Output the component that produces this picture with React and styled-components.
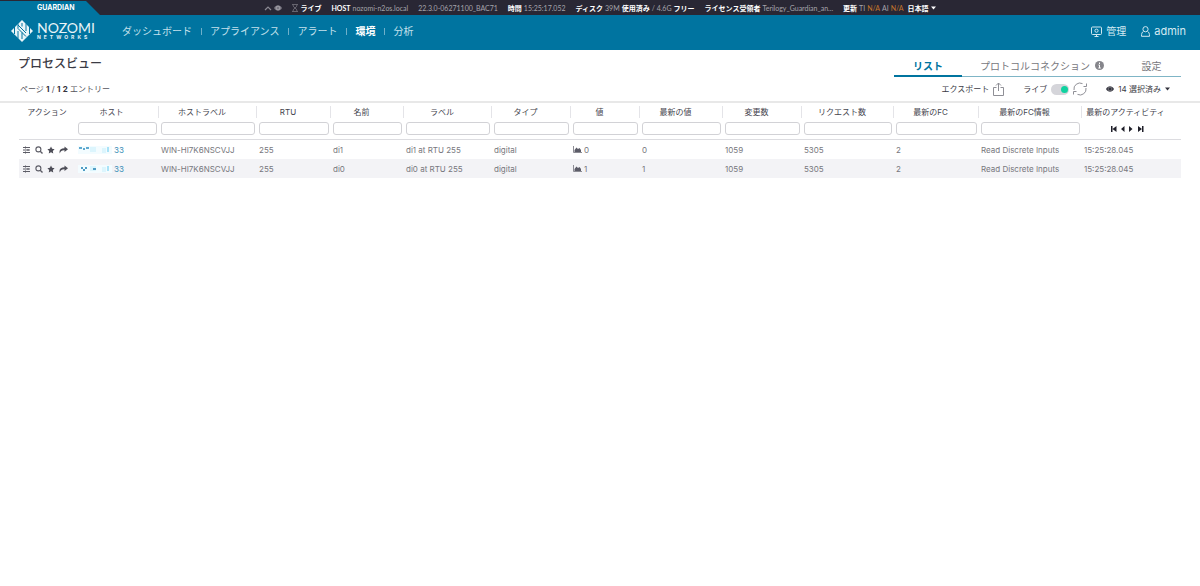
import React, { useState } from 'react';
import styled, { createGlobalStyle } from 'styled-components';

const COLUMNS = [
  { title: 'アクション', width: 57 },
  { title: 'ホスト', width: 83, filter: true },
  { title: 'ホストラベル', width: 98, filter: true },
  { title: 'RTU', width: 74, filter: true },
  { title: '名前', width: 73, filter: true },
  { title: 'ラベル', width: 88, filter: true },
  { title: 'タイプ', width: 79, filter: true },
  { title: '値', width: 69, filter: true },
  { title: '最新の値', width: 83, filter: true },
  { title: '変更数', width: 79, filter: true },
  { title: 'リクエスト数', width: 92, filter: true },
  { title: '最新のFC', width: 85, filter: true },
  { title: '最新のFC情報', width: 103, filter: true },
  { title: '最新のアクティビティ', width: 99, pager: true },
];

const ROWS = [
  { name: 'di1', label: 'di1 at RTU 255', value: 0 },
  { name: 'di0', label: 'di0 at RTU 255', value: 1 },
];

const NAV = ['ダッシュボード', 'アプライアンス', 'アラート', '環境', '分析'];

const Logo = () => (
  <svg width="22" height="22" viewBox="0 0 22 22" aria-hidden="true">
    <path d="M11 0L22 11 11 22 0 11z" fill="#e9f4f8" />
    <path
      d="M3.500 7v7M7 3.500v5l8 8M7 11v7.500M7 5l8 8M11 12.500V19M11 3v3.500M15 3.500V11M18.500 7v7"
      fill="none"
      stroke="#0074a0"
      strokeWidth="1"
    />
  </svg>
);

const SlidersIcon = () => (
  <svg width="8" height="8" viewBox="0 0 8 8" aria-hidden="true">
    <path
      d="M0 1.5h7M0 4h7M0 6.5h7M2.5 .5v2M5 3v2M2.5 5.5v2"
      fill="none"
      stroke="#5c5c66"
      strokeWidth="1"
    />
  </svg>
);

const SearchIcon = () => (
  <svg width="8" height="8" viewBox="0 0 8 8" aria-hidden="true">
    <circle cx="3.4" cy="3.4" r="2.5" fill="none" stroke="#5c5c66" strokeWidth="1.1" />
    <path d="M5.2 5.2L7.5 7.5" stroke="#5c5c66" strokeWidth="1.4" />
  </svg>
);

const StarIcon = () => (
  <svg width="8" height="8" viewBox="0 0 16 16" aria-hidden="true">
    <path d="M8 1l2.2 4.6 5 .7-3.6 3.5.9 5L8 12.4l-4.5 2.4.9-5L.8 6.3l5-.7z" fill="#4d4d57" />
  </svg>
);

const ShareIcon = () => (
  <svg width="9" height="8" viewBox="0 0 9 8" aria-hidden="true">
    <path d="M5.5.5L9 3.3 5.5 6V4.3C3 4.2 1.5 5 .8 7.5-.2 4 1.5 2.2 5.5 2.2z" fill="#4d4d57" />
  </svg>
);

const ChartIcon = () => (
  <svg width="9" height="7" viewBox="0 0 9 7" aria-hidden="true">
    <path d="M.5 0v6.5H9" fill="none" stroke="#8c8c94" strokeWidth="1" />
    <path d="M1.5 6V4l2-2.500L5 3l1.500-1L8 4v2z" fill="#5c5c68" />
  </svg>
);

const EyeIcon = ({ color }) => (
  <svg width="8" height="6" viewBox="0 0 8 6" aria-hidden="true">
    <path d="M0 3C2-.6 6-.6 8 3 6 6.6 2 6.6 0 3z" fill={color} />
    <circle cx="4" cy="3" r="1.9" fill="none" stroke="#fff" strokeOpacity=".6" strokeWidth=".5" />
  </svg>
);

const CaretIcon = ({ color }) => (
  <svg width="5" height="4" viewBox="0 0 5 4" aria-hidden="true">
    <path d="M0 .5h5L2.5 3.5z" fill={color} />
  </svg>
);

const HostMask = ({ alt }) => (
  <svg width="34" height="8" viewBox="0 0 34 8" aria-hidden="true">
    <rect width="34" height="8" fill="#f3fcff" />
    <path d="M12 1h6v5h-6zM24 2h4v5h-4z" fill="#dcf5fd" />
    {alt ? (
      <path d="M3 2h2v2H3zM5 4h2v2H5zM7 2h2v2H7zM15 3h3v2h-3z" fill="#4f9cc4" />
    ) : (
      <path d="M1 1h3v2H1zM5 2h2v2H5zM8 1h3v2H8z" fill="#5fa9d0" />
    )}
    <path d="M29 1h2v5h-2z" fill="#a9e2f7" />
  </svg>
);

const App = () => {
  const [live, setLive] = useState(true);

  return (
    <Page>
      <GlobalStyle />
      <StatusBar>
        <Product>GUARDIAN</Product>
        <Status>
          <StatusItem>
            <svg width="8" height="6" viewBox="0 0 8 6" aria-hidden="true">
              <path d="M1 5l3-3 3 3" fill="none" stroke="#8b8993" strokeWidth="1.2" />
            </svg>
            <EyeIcon color="#777580" />
          </StatusItem>
          <StatusItem>
            <svg width="6" height="8" viewBox="0 0 6 8" aria-hidden="true">
              <path
                d="M0 .5h6M0 7.5h6M1 1c0 3 4 3 4 6M5 1c0 3-4 3-4 6"
                fill="none"
                stroke="#77757f"
                strokeWidth=".8"
              />
            </svg>
            <b>ライブ</b>
          </StatusItem>
          <StatusItem>
            <b>HOST</b> nozomi-n2os.local
          </StatusItem>
          <StatusItem>22.3.0-06271100_BAC71</StatusItem>
          <StatusItem>
            <b>時間</b> 15:25:17.052
          </StatusItem>
          <StatusItem>
            <b>ディスク</b> 39M <b>使用済み</b> / 4.6G <b>フリー</b>
          </StatusItem>
          <StatusItem>
            <b>ライセンス受領者</b> Terilogy_Guardian_an...
          </StatusItem>
          <StatusItem>
            <b>更新</b> TI <Missing>N/A</Missing> AI <Missing>N/A</Missing>
            <LanguageButton>
              <b>日本語</b>
              <CaretIcon color="#fff" />
            </LanguageButton>
          </StatusItem>
        </Status>
      </StatusBar>

      <Header>
        <Brand href="#">
          <Logo />
          <BrandText>
            <BrandName>NOZOMI</BrandName>
            <BrandSub>NETWORKS</BrandSub>
          </BrandText>
        </Brand>
        <Nav>
          {NAV.map((item) => (
            <NavItem key={item}>
              <NavLink href="#" $active={item === '環境'}>
                {item}
              </NavLink>
            </NavItem>
          ))}
        </Nav>
        <UserMenu>
          <UserLink href="#">
            <svg width="11" height="11" viewBox="0 0 11 11" fill="none" stroke="#cfe6ef" aria-hidden="true">
              <rect x=".5" y="1" width="10" height="7.5" rx="1" />
              <circle cx="5.5" cy="4.7" r="1.6" />
              <path d="M3.5 10.5h4M5.5 8.5v2" />
            </svg>
            管理
          </UserLink>
          <UserLink href="#">
            <svg width="9" height="11" viewBox="0 0 9 11" fill="none" stroke="#cfe6ef" aria-hidden="true">
              <circle cx="4.5" cy="3.2" r="2.6" />
              <path d="M2.5 5.3C1 6.2.5 7.5.5 10.300h8c0-2.800-.5-4.100-2-5" />
            </svg>
            <UserName>admin</UserName>
          </UserLink>
        </UserMenu>
      </Header>

      <TitleRow>
        <Title>プロセスビュー</Title>
        <Tabs>
          <Tab $active $width={68}>
            リスト
          </Tab>
          <Tab $width={160}>
            プロトコルコネクション
            <svg width="9" height="9" viewBox="0 0 9 9" aria-hidden="true">
              <circle cx="4.5" cy="4.5" r="4.5" fill="#85858b" />
              <path d="M4.5 1.5v1.5M3.5 4h1v3M3.3 7h2.5" fill="none" stroke="#fff" />
            </svg>
          </Tab>
          <Tab $width={59}>設定</Tab>
        </Tabs>
      </TitleRow>

      <Toolbar>
        <Paging>
          ページ <b>1</b> / <b>1</b> <b>2</b> エントリー
        </Paging>
        <Tools>
          <PlainButton>
            エクスポート
            <svg width="11" height="14" viewBox="0 0 11 14" fill="none" stroke="#8f8f96" aria-hidden="true">
              <path d="M3.5 5.5h-3v8h10v-8h-3M5.5 9V1M3 3.5L5.5 1 8 3.5" />
            </svg>
          </PlainButton>
          <Live>
            <label htmlFor="live">ライブ</label>
            <Switch
              id="live"
              type="checkbox"
              checked={live}
              onChange={(e) => setLive(e.target.checked)}
            />
            <PlainButton aria-label="Refresh">
              <svg width="14" height="14" viewBox="0 0 14 14" fill="none" stroke="#8f8f96" aria-hidden="true">
                <path d="M1 8a6 6 0 0 1 8.500-6.400M13 6a6 6 0 0 1-8.500 6.400M10.500 4.500h3v-3M3.500 9.500h-3v3" />
              </svg>
            </PlainButton>
          </Live>
          <PlainButton>
            <EyeIcon color="#33333d" />
            14 選択済み
            <CaretIcon color="#33333d" />
          </PlainButton>
        </Tools>
      </Toolbar>

      <Content>
        <Table>
          <colgroup>
            {COLUMNS.map((col) => (
              <col key={col.title} style={{ width: col.width }} />
            ))}
          </colgroup>
          <thead>
            <tr>
              {COLUMNS.map((col) => (
                <HeadCell key={col.title}>
                  <HeadTitle $sortable={col.filter || col.pager} $line={col.filter}>
                    {col.title}
                  </HeadTitle>
                  {col.filter && <Filter aria-label={col.title} />}
                  {col.pager && (
                    <Pager>
                      <svg width="34" height="8" viewBox="0 0 34 8" fill="#1f1f29" aria-hidden="true">
                        <path d="M1 1h1.5v6H1zM6.5 1v6L2.5 4zM14.5 1v6L11 4zM19 1v6l3.5-3zM28 1v6l4-3zM32 1h1.5v6H32z" />
                      </svg>
                    </Pager>
                  )}
                </HeadCell>
              ))}
            </tr>
          </thead>
          <tbody>
            {ROWS.map((row, i) => (
              <Row key={row.name}>
                <Cell>
                  <Actions>
                    <SlidersIcon />
                    <SearchIcon />
                    <StarIcon />
                    <ShareIcon />
                  </Actions>
                </Cell>
                <Cell>
                  <HostLink href="#">
                    <HostMask alt={i === 1} />
                    33
                  </HostLink>
                </Cell>
                <Cell>WIN-HI7K6NSCVJJ</Cell>
                <Cell>255</Cell>
                <Cell>{row.name}</Cell>
                <Cell>{row.label}</Cell>
                <Cell>digital</Cell>
                <Cell>
                  <Value>
                    <ChartIcon />
                    {row.value}
                  </Value>
                </Cell>
                <Cell>{row.value}</Cell>
                <Cell>1059</Cell>
                <Cell>5305</Cell>
                <Cell>2</Cell>
                <Cell>Read Discrete Inputs</Cell>
                <Cell>15:25:28.045</Cell>
              </Row>
            ))}
          </tbody>
        </Table>
      </Content>
    </Page>
  );
};

const GlobalStyle = createGlobalStyle`
  * {
    box-sizing: border-box;
  }
  body {
    margin: 0;
    background: #fff;
  }
  svg {
    flex: none;
  }
`;
const Page = styled.div`
  font-family: Inter, 'Noto Sans CJK JP', sans-serif;
  font-size: 8px;
  line-height: 12px;
  color: #4a4a52;
`;
const StatusBar = styled.div`
  position: relative;
  display: flex;
  justify-content: center;
  height: 15px;
  background: #292734;
`;
const Product = styled.div`
  position: absolute;
  top: 1px;
  left: 0;
  width: 100px;
  height: 14px;
  padding-left: 37px;
  background: #0074a0;
  clip-path: polygon(0 0, 86px 0, 100% 100%, 0 100%);
  color: #fff;
  font-size: 7px;
  font-weight: 700;
  line-height: 13px;
`;
const Status = styled.div`
  display: flex;
  align-items: center;
  gap: 10px;
  color: #a5a4ab;
  font-family: Lato, 'Noto Sans CJK JP', sans-serif;
  font-size: 7px;
  white-space: nowrap;
  b {
    color: #fff;
  }
`;
const StatusItem = styled.div`
  display: flex;
  align-items: center;
  gap: 2px;
`;
const Missing = styled.span`
  color: #c4762c;
`;
const PlainButton = styled.button`
  display: flex;
  align-items: center;
  gap: 4px;
  padding: 0;
  border: 0;
  background: none;
  color: inherit;
  font: inherit;
`;
const LanguageButton = styled(PlainButton)`
  gap: 2px;
  padding-left: 2px;
`;
const Header = styled.header`
  display: flex;
  align-items: center;
  height: 35px;
  padding: 0 14px 3px 11px;
  background: #0074a0;
`;
const Brand = styled.a`
  display: flex;
  align-items: center;
  gap: 4px;
  width: 111px;
  color: #e9f4f8;
  text-decoration: none;
`;
const BrandText = styled.div`
  display: flex;
  flex-direction: column;
`;
const BrandName = styled.span`
  font-family: Lato, sans-serif;
  font-size: 14px;
  line-height: 12px;
`;
const BrandSub = styled.span`
  font-size: 5px;
  font-weight: 700;
  line-height: 6px;
  letter-spacing: 3px;
`;
const Nav = styled.nav`
  display: flex;
  align-items: center;
`;
const NavItem = styled.div`
  display: flex;
  align-items: center;
  & + &::before {
    content: '';
    width: 1px;
    height: 7px;
    margin: 0 8px 0 9px;
    background: #6fb0ca;
  }
`;
const NavLink = styled.a`
  color: ${(props) => (props.$active ? '#fff' : '#c5e1ec')};
  font-size: 10px;
  font-weight: ${(props) => (props.$active ? 700 : 400)};
  text-decoration: none;
`;
const UserMenu = styled.div`
  display: flex;
  gap: 15px;
  margin-left: auto;
`;
const UserLink = styled.a`
  display: flex;
  align-items: center;
  gap: 4px;
  color: #d5eaf2;
  font-size: 10px;
  text-decoration: none;
`;
const UserName = styled.span`
  font-size: 11px;
`;
const TitleRow = styled.div`
  display: flex;
  justify-content: space-between;
  height: 27px;
  padding: 0 19px 0 18px;
`;
const Title = styled.h1`
  margin: 0;
  padding-top: 6px;
  color: #3b3b45;
  font-size: 12px;
  font-weight: 500;
  line-height: 16px;
`;
const Tabs = styled.div`
  display: flex;
  border-bottom: 1px solid #7fb5c6;
`;
const Tab = styled.button`
  display: flex;
  align-items: center;
  justify-content: center;
  gap: 5px;
  width: ${(props) => props.$width}px;
  margin-bottom: -1px;
  padding: 6px 0 0;
  border: 0;
  border-bottom: 2px solid ${(props) => (props.$active ? '#00749f' : 'transparent')};
  background: none;
  color: ${(props) => (props.$active ? '#00749f' : '#77777d')};
  font-family: inherit;
  font-size: 10px;
  font-weight: ${(props) => (props.$active ? 700 : 400)};
  line-height: 16px;
  white-space: nowrap;
`;
const Toolbar = styled.div`
  display: flex;
  align-items: center;
  justify-content: space-between;
  height: 26px;
  padding: 0 30px 0 20px;
  border-bottom: 2px solid #e8e8e8;
`;
const Paging = styled.div`
  color: #55555d;
  b {
    color: #33333d;
  }
`;
const Tools = styled.div`
  display: flex;
  align-items: center;
  gap: 19px;
  color: #3b3b45;
`;
const Live = styled.div`
  display: flex;
  align-items: center;
  gap: 4px;
`;
const Switch = styled.input`
  appearance: none;
  display: flex;
  align-items: center;
  justify-content: flex-end;
  width: 18px;
  height: 11px;
  margin: 0;
  padding: 0 1px;
  border-radius: 6px;
  background: #d5d5da;
  &::after {
    content: '';
    width: 7px;
    height: 7px;
    border-radius: 50%;
    background: #10d2a0;
  }
  &:not(:checked) {
    justify-content: flex-start;
  }
`;
const Content = styled.main`
  padding: 0 19px;
`;
const Table = styled.table`
  width: 100%;
  table-layout: fixed;
  border-collapse: separate;
  border-spacing: 0;
`;
const HeadCell = styled.th`
  height: 37px;
  padding: 3px 0 0;
  border-bottom: 1px solid #dcdce0;
  color: #44444e;
  font-weight: 400;
  vertical-align: top;
  white-space: nowrap;
`;
const HeadTitle = styled.div`
  margin-bottom: 4px;
  padding-right: ${(props) => (props.$sortable ? 11 : 0)}px;
  border-right: 1px solid ${(props) => (props.$line ? '#e4e4e8' : 'transparent')};
`;
const Filter = styled.input`
  display: block;
  width: calc(100% - 4px);
  height: 13px;
  margin: 0 2px;
  padding: 0 3px;
  border: 1px solid #d2d2d6;
  border-radius: 3px;
  outline: none;
  font: inherit;
`;
const Pager = styled.div`
  display: flex;
  justify-content: center;
  padding: 3px 10px 0 0;
`;
const Row = styled.tr`
  &:nth-child(even) {
    background: #f3f3f6;
  }
`;
const Cell = styled.td`
  height: 19px;
  padding: 0 2px;
  color: #77777d;
  white-space: nowrap;
`;
const Actions = styled.div`
  display: flex;
  gap: 4px;
  padding-left: 2px;
`;
const HostLink = styled.a`
  display: flex;
  align-items: center;
  gap: 2px;
  color: #3a8fb7;
  text-decoration: none;
`;
const Value = styled.span`
  display: flex;
  align-items: center;
  gap: 2px;
`;

export default App;
